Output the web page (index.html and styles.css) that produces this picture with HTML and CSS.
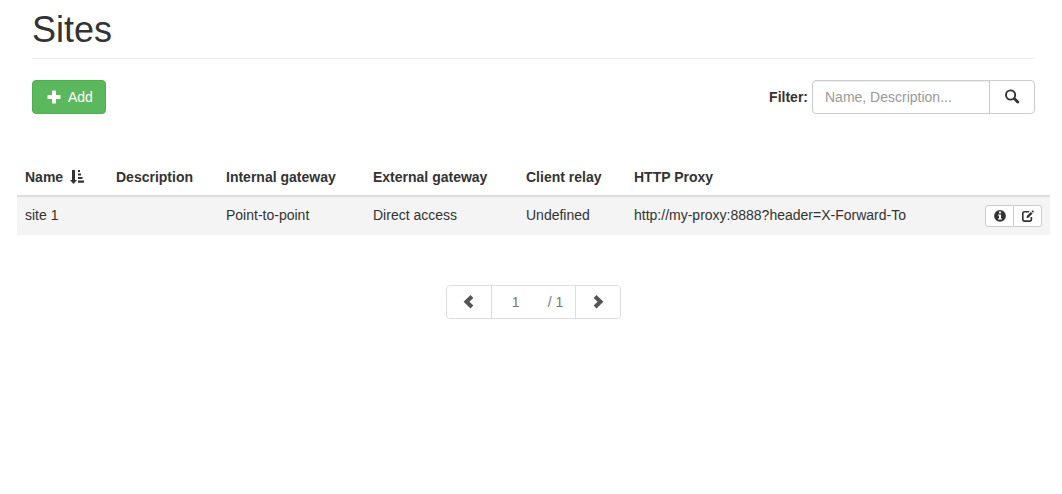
FILE: index.html
```html
<!DOCTYPE html>
<html lang="en">
<head>
  <title>Sites</title>
  <meta charset="UTF-8">
  <meta name="viewport" content="width=device-width, initial-scale=1">
  <link rel="stylesheet" href="styles.css">
</head>
<body>
  <div class="container">
    <h1 class="page-header">Sites</h1>

    <div class="toolbar">
      <button type="button" class="btn btn-success">
        <svg class="icon" viewBox="0 0 14 14"><path d="M5.4 0.5h3.2q.4 0 .4.4V5h4.1q.4 0 .4.4v3.2q0 .4-.4.4H9v4.1q0 .4-.4.4H5.4q-.4 0-.4-.4V9H.9Q.5 9 .5 8.6V5.4Q.5 5 .9 5H5V.9q0-.4.4-.4z"/></svg>
        Add
      </button>
      <form class="filter">
        <label for="filter">Filter:</label>
        <div class="input-group">
          <input type="text" id="filter" class="form-control" placeholder="Name, Description...">
          <button type="button" class="btn btn-default" aria-label="Search">
            <svg class="icon" viewBox="0 0 14 14"><circle cx="5.6" cy="5" r="4.6" fill="none" stroke="currentColor" stroke-width="1.9"/><path d="M7.9 9.3L9.9 7.3L14 11.3Q14.6 12 14 12.7L13.5 13.2Q12.7 13.9 12 13.2z"/></svg>
          </button>
        </div>
      </form>
    </div>

    <table class="table">
      <colgroup>
        <col class="col-name">
        <col class="col-description">
        <col class="col-internal">
        <col class="col-external">
        <col class="col-relay">
        <col>
        <col class="col-actions">
      </colgroup>
      <thead>
        <tr>
          <th>Name <svg class="icon sort" viewBox="0 0 14 14"><path d="M2 0h3v10h2L3.5 14L0 10h2zM8 0h2v2H8zM8 3.5h3v2H8zM8 7h4.5v2H8zM8 10.5h6v2.2H8z"/></svg></th>
          <th>Description</th>
          <th>Internal gateway</th>
          <th>External gateway</th>
          <th>Client relay</th>
          <th>HTTP Proxy</th>
          <th></th>
        </tr>
      </thead>
      <tbody>
        <tr>
          <td>site 1</td>
          <td></td>
          <td>Point-to-point</td>
          <td>Direct access</td>
          <td>Undefined</td>
          <td>http://my-proxy:8888?header=X-Forward-To</td>
          <td>
            <div class="btn-group">
              <button type="button" class="btn btn-default btn-xs" aria-label="Details">
                <svg class="icon" viewBox="0 0 12 12"><path fill-rule="evenodd" d="M6 0a5.9 5.9 0 1 0 0 11.8A5.9 5.9 0 0 0 6 0zM5 1.6h2v1.6H5zM4 4.4h3v4h1v1.2H4V8.4h1V5.5H4z"/></svg>
              </button>
              <button type="button" class="btn btn-default btn-xs" aria-label="Edit">
                <svg class="icon" viewBox="0 0 12 12"><path d="M7.2 1.7H2.6Q.8 1.7.8 3.5V9.3Q.8 11.1 2.6 11.1H7.6Q9.4 11.1 9.4 9.3V7" fill="none" stroke="currentColor" stroke-width="1.6"/><path d="M4.4 8.2L5 5.8L8.9 1.9L10.6 3.6L6.7 7.5zM9.5 1.3L10.6.2L12 1.7L11 2.8z"/></svg>
              </button>
            </div>
          </td>
        </tr>
      </tbody>
    </table>

    <nav class="pager" aria-label="Pages">
      <button type="button" class="btn" aria-label="Previous page">
        <svg class="icon" viewBox="0 0 14 14"><path d="M8.5 0.1L11.4 3L7.4 6.8L11.4 10.6L8.5 13.5L1.6 6.8z"/></svg>
      </button>
      <div class="pager-page">
        <input type="text" class="pager-input" aria-label="Page" value="1">
        <span>/ 1</span>
      </div>
      <button type="button" class="btn" aria-label="Next page">
        <svg class="icon" viewBox="0 0 14 14"><path d="M5.5 0.1L2.6 3L6.6 6.8L2.6 10.6L5.5 13.5L12.4 6.8z"/></svg>
      </button>
    </nav>
  </div>
</body>
</html>
```
FILE: styles.css
```css
* {
  box-sizing: border-box;
}

body {
  margin: 0;
  font-family: "Helvetica Neue", Helvetica, "Liberation Sans", Arial, sans-serif;
  font-size: 14px;
  line-height: 20px;
  color: #333;
  background: #fff;
}

button,
input {
  font: inherit;
  color: inherit;
}

.container {
  padding: 10px 12px 0 17px;
}

.page-header {
  margin: 0 15px 21px;
  padding-bottom: 8px;
  border-bottom: 1px solid #eee;
  font-size: 36px;
  font-weight: normal;
  line-height: 40px;
}

.icon {
  width: 14px;
  height: 14px;
  flex: none;
  fill: currentColor;
  overflow: visible;
}

.toolbar {
  display: flex;
  justify-content: space-between;
  margin: 0 15px 45px;
}

.btn {
  display: flex;
  align-items: center;
  justify-content: center;
  height: 34px;
  padding: 6px 15px;
  border: 1px solid transparent;
  border-radius: 4px;
  background: #fff;
  cursor: pointer;
}

.btn-success {
  gap: 7px;
  padding: 6px 12px 6px 14px;
  color: #fff;
  background: #5cb85c;
  border-color: #4cae4c;
}

.btn-default {
  border-color: #ccc;
}

.btn-xs {
  width: 29px;
  height: 22px;
  padding: 1px 5px;
  border-radius: 3px;
}

.btn-xs .icon {
  width: 12px;
  height: 12px;
}

.filter {
  display: flex;
  align-items: center;
  gap: 4px;
}

.filter label {
  font-weight: bold;
}

.input-group {
  display: flex;
}

.form-control {
  width: 178px;
  height: 34px;
  padding: 6px 12px;
  border: 1px solid #ccc;
  border-radius: 4px 0 0 4px;
  box-shadow: inset 0 1px 1px rgba(0, 0, 0, 0.075);
}

.form-control::placeholder {
  color: #999;
}

.input-group .btn {
  width: 46px;
  margin-left: -1px;
  border-radius: 0 4px 4px 0;
}

.table {
  width: 100%;
  margin-bottom: 50px;
  border-collapse: separate;
  border-spacing: 0;
  table-layout: fixed;
}

.table th,
.table td {
  padding: 8px;
  text-align: left;
  vertical-align: top;
}

.table th {
  border-bottom: 2px solid #ddd;
  white-space: nowrap;
}

.table td {
  background: #f4f4f4;
}

.sort {
  margin-left: 3px;
  vertical-align: -2px;
}

.col-name {
  width: 91px;
}

.col-description {
  width: 110px;
}

.col-internal {
  width: 147px;
}

.col-external {
  width: 153px;
}

.col-relay {
  width: 108px;
}

.col-actions {
  width: 73px;
}

.btn-group {
  display: flex;
}

.btn-group .btn:first-child {
  border-radius: 3px 0 0 3px;
}

.btn-group .btn:last-child {
  margin-left: -1px;
  border-radius: 0 3px 3px 0;
}

.pager {
  display: flex;
  width: max-content;
  margin: 0 auto;
  border: 1px solid #ddd;
  border-radius: 4px;
  color: #777;
}

.pager .btn {
  width: 44px;
  height: 32px;
  padding: 0;
  border: 0;
  color: #555;
}

.pager-page {
  display: flex;
  align-items: center;
  gap: 20px;
  padding: 0 12px;
  border: solid #ddd;
  border-width: 0 1px;
}

.pager-input {
  width: 24px;
  padding: 0;
  border: 0;
  text-align: center;
}
```
